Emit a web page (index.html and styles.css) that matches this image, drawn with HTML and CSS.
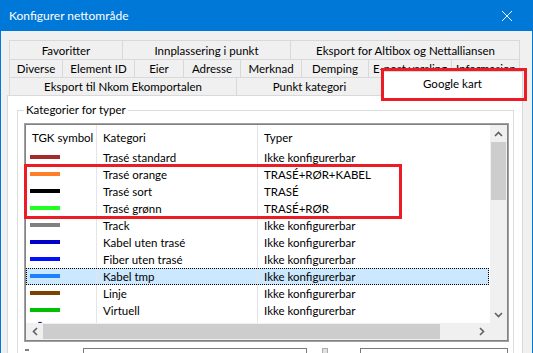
FILE: index.html
```html
<!DOCTYPE html>
<html lang="no">
<head>
  <meta charset="UTF-8">
  <title>Konfigurer nettområde</title>
  <link rel="stylesheet" href="styles.css">
</head>
<body>

  <div class="window">
    <div class="titlebar">
      <span class="title">Konfigurer nettområde</span>
      <svg class="close" width="10" height="10" viewBox="0 0 10 10"><path d="M0 0 L10 10 M10 0 L0 10" stroke="#fff" stroke-width="1"/></svg>
    </div>

    <div class="client">
      <div class="tabs">
        <div class="tab-row row1">
          <div class="tab">Favoritter</div>
          <div class="tab">Innplassering i punkt</div>
          <div class="tab">Eksport for Altibox og Nettalliansen</div>
        </div>
        <div class="tab-row row2">
          <div class="tab">Diverse</div>
          <div class="tab">Element ID</div>
          <div class="tab">Eier</div>
          <div class="tab">Adresse</div>
          <div class="tab">Merknad</div>
          <div class="tab">Demping</div>
          <div class="tab">E-post varsling</div>
          <div class="tab">Informasjon</div>
        </div>
        <div class="tab-row row3">
          <div class="tab">Eksport til Nkom Ekomportalen</div>
          <div class="tab">Punkt kategori</div>
          <div class="tab"></div>
        </div>
      </div>

      <div class="tab-active">Google kart</div>

      <div class="panel">
        <fieldset class="group">
          <legend>Kategorier for typer</legend>

          <div class="list">
            <div class="view">
              <div class="list-head">
                <div class="c1">TGK symbol</div>
                <div class="c2">Kategori</div>
                <div class="c3">Typer</div>
              </div>
              <div class="row"><div class="c1"><span class="swatch sw-standard"></span></div><div class="c2">Trasé standard</div><div class="c3">Ikke konfigurerbar</div></div>
              <div class="row"><div class="c1"><span class="swatch sw-orange"></span></div><div class="c2">Trasé orange</div><div class="c3">TRASÉ+RØR+KABEL</div></div>
              <div class="row"><div class="c1"><span class="swatch sw-sort"></span></div><div class="c2">Trasé sort</div><div class="c3">TRASÉ</div></div>
              <div class="row"><div class="c1"><span class="swatch sw-gronn"></span></div><div class="c2">Trasé grønn</div><div class="c3">TRASÉ+RØR</div></div>
              <div class="row"><div class="c1"><span class="swatch sw-track"></span></div><div class="c2">Track</div><div class="c3">Ikke konfigurerbar</div></div>
              <div class="row"><div class="c1"><span class="swatch sw-kabel"></span></div><div class="c2">Kabel uten trasé</div><div class="c3">Ikke konfigurerbar</div></div>
              <div class="row"><div class="c1"><span class="swatch sw-fiber"></span></div><div class="c2">Fiber uten trasé</div><div class="c3">Ikke konfigurerbar</div></div>
              <div class="row sel"><div class="c1"><span class="swatch sw-tmp"></span></div><div class="c2">Kabel tmp</div><div class="c3">Ikke konfigurerbar</div></div>
              <div class="row"><div class="c1"><span class="swatch sw-linje"></span></div><div class="c2">Linje</div><div class="c3">Ikke konfigurerbar</div></div>
              <div class="row"><div class="c1"><span class="swatch sw-virtuell"></span></div><div class="c2">Virtuell</div><div class="c3">Ikke konfigurerbar</div></div>
              <div class="row"><div class="c1"><svg class="glyph" width="8" height="6" viewBox="0 0 8 6"><path d="M1 5 Q4 0 7 5" fill="none" stroke="#203060" stroke-width="1.4"/></svg></div><div class="c2"></div><div class="c3"></div></div>
            </div>

            <div class="vscroll">
              <div class="sbtn"><svg width="9" height="6" viewBox="0 0 9 6"><path d="M1 5 L4.5 1.5 L8 5" fill="none" stroke="#606060" stroke-width="1.6"/></svg></div>
              <div class="vtrack"><div class="vthumb"></div></div>
              <div class="sbtn"><svg width="9" height="6" viewBox="0 0 9 6"><path d="M1 1 L4.5 4.5 L8 1" fill="none" stroke="#606060" stroke-width="1.6"/></svg></div>
            </div>

            <div class="hscroll">
              <div class="sbtn"><svg width="6" height="9" viewBox="0 0 6 9"><path d="M5 1 L1.5 4.5 L5 8" fill="none" stroke="#606060" stroke-width="1.6"/></svg></div>
              <div class="htrack"><div class="hthumb"></div></div>
              <div class="sbtn"><svg width="6" height="9" viewBox="0 0 6 9"><path d="M1 1 L4.5 4.5 L1 8" fill="none" stroke="#606060" stroke-width="1.6"/></svg></div>
            </div>

            <div class="corner"></div>
          </div>

          <div class="below">
            <span class="check"></span>
            <span class="field field-a"></span>
            <span class="knob"></span>
            <span class="field field-b"></span>
          </div>
        </fieldset>
      </div>
    </div>

    <div class="mark mark-tab"></div>
    <div class="mark mark-rows"></div>
  </div>

</body>
</html>
```

FILE: styles.css
```css
* {
  box-sizing: border-box;
}

body {
  margin: 0;
  background-color: #f0f0f0;
  font-family: 'Lato', 'Segoe UI', 'Noto Sans', sans-serif;
  font-size: 11.5px;
  color: #000;
}

.window {
  position: relative;
  width: 533px;
  height: 353px;
  overflow: hidden;
  border-left: 1px solid #0078d7;
  border-right: 1px solid #0078d7;
  background-color: #f0f0f0;
}

.titlebar {
  height: 31px;
  background-color: #0078d7;
  color: white;
  display: flex;
  align-items: center;
  justify-content: space-between;
  padding: 0 20px 0 8px;
}

.title {
  font-size: 12px;
}

.client {
  padding-top: 9px;
}

/* tab strip */

.tabs {
  margin-left: 8px;
  width: 511px;
}

.tab-row {
  display: grid;
  border-right: 1px solid #d9d9d9;
}

.row1 {
  grid-template-columns: 113px 168px 230px;
  height: 19px;
}

.row2 {
  grid-template-columns: 53px 72px 49px 57px 61px 67px 83px 69px;
  height: 18px;
}

.row3 {
  grid-template-columns: 227px 146px 138px;
  height: 18px;
}

.tab {
  border-left: 1px solid #d9d9d9;
  border-top: 1px solid #d9d9d9;
  display: flex;
  align-items: center;
  justify-content: center;
  white-space: nowrap;
  overflow: hidden;
}

.tab-active {
  position: absolute;
  left: 381px;
  top: 71px;
  width: 141px;
  height: 25px;
  background-color: white;
  border: 1px solid #d9d9d9;
  border-bottom: none;
  text-align: center;
  padding-top: 5px;
  z-index: 2;
}

.panel {
  margin-left: 6px;
  width: 516px;
  height: 260px;
  background-color: white;
  border: 1px solid #d9d9d9;
}

/* group box */

.group {
  margin: 6px 8px 0 9px;
  padding: 0 4px 0 6px;
  border: 1px solid #dcdcdc;
  height: 260px;
  min-width: 0;
}

.group legend {
  padding: 0 2px;
  margin-left: 0;
  line-height: 16px;
}

/* list view */

.list {
  margin-top: 5px;
  height: 219px;
  border: 1px solid #a0a0a0;
  box-shadow: inset 0 0 0 1px #828282;
  padding: 1px;
  display: grid;
  grid-template-columns: 464px 17px;
  grid-template-rows: 198px 17px;
  background-color: white;
}

.view {
  overflow: hidden;
}

.list-head,
.row {
  display: flex;
  white-space: nowrap;
}

.list-head {
  height: 24px;
  align-items: center;
}

.list-head > div {
  height: 24px;
  display: flex;
  align-items: center;
}

.row {
  height: 17px;
  line-height: 17px;
}

.c1 {
  width: 71px;
  flex: none;
  padding-left: 6px;
  border-right: 1px solid #e5e5e5;
}

.row .c1 {
  padding-left: 4px;
}

.c2 {
  width: 161px;
  flex: none;
  padding-left: 6px;
  border-right: 1px solid #e5e5e5;
}

.c3 {
  flex: 1;
  padding-left: 6px;
}

.row.sel {
  background-color: #cce8ff;
  outline: 1px dotted #000;
  outline-offset: -1px;
  margin-right: 1px;
}

.swatch {
  display: block;
  width: 30px;
  height: 4px;
  margin-top: 6px;
}

.sw-standard { background-color: #a52a2a; }
.sw-orange { background-color: #ff7f27; }
.sw-sort { background-color: #000000; }
.sw-gronn { background-color: #22ff22; }
.sw-track { background-color: #808080; }
.sw-kabel { background-color: #0000c8; }
.sw-fiber { background-color: #0010ff; }
.sw-tmp { background-color: #1e82ff; }
.sw-linje { background-color: #804000; }
.sw-virtuell { background-color: #00c000; }

.glyph {
  display: block;
  margin: 1px 0 0 6px;
}

/* scroll bars */

.vscroll {
  display: flex;
  flex-direction: column;
  background-color: #f0f0f0;
}

.hscroll {
  display: flex;
  background-color: #f0f0f0;
}

.sbtn {
  width: 17px;
  height: 17px;
  flex: none;
  display: flex;
  align-items: center;
  justify-content: center;
}

.vtrack {
  flex: 1;
  padding: 0 1px;
}

.vthumb {
  height: 58px;
  background-color: #cdcdcd;
}

.htrack {
  flex: 1;
  padding: 1px 0;
}

.hthumb {
  width: 397px;
  height: 15px;
  background-color: #cdcdcd;
}

.corner {
  background-color: #f0f0f0;
}

/* controls under the list */

.below {
  display: flex;
  align-items: flex-start;
  margin-top: 6px;
  height: 20px;
}

.check {
  width: 4px;
  height: 2px;
  margin: 1px 0 0 1px;
  background-color: #808080;
}

.field {
  height: 20px;
  border: 1px solid #7a7a7a;
  background-color: white;
}

.field-a {
  margin-left: 54px;
  width: 224px;
}

.knob {
  width: 6px;
  height: 8px;
  margin-left: 15px;
  border: 1px solid #adadad;
  background-color: #e1e1e1;
}

.field-b {
  margin-left: 32px;
  width: 148px;
}

/* annotation boxes */

.mark {
  position: absolute;
  border: 3px solid #ed1c24;
  z-index: 3;
}

.mark-tab {
  left: 380px;
  top: 68px;
  width: 146px;
  height: 33px;
}

.mark-rows {
  left: 23px;
  top: 164px;
  width: 378px;
  height: 55px;
}
```
